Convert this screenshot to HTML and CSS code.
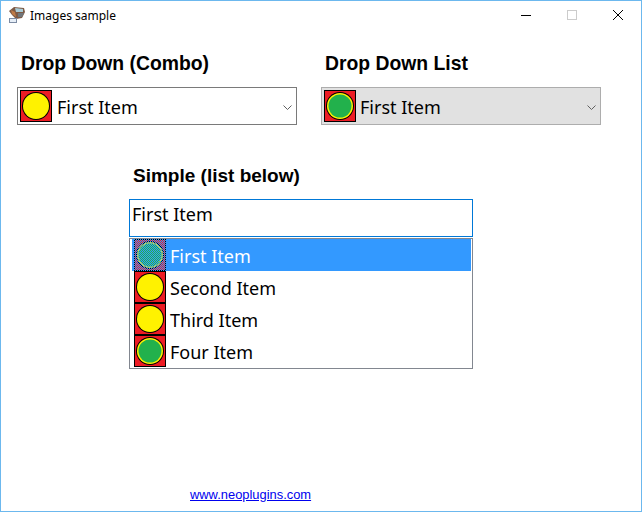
FILE: index.html
```html
<!DOCTYPE html>
<html lang="en">
<head>
<meta charset="utf-8">
<title>Images sample</title>
<link rel="stylesheet" href="styles.css">
</head>
<body>
<svg class="defs" width="0" height="0" aria-hidden="true">
  <defs>
    <symbol id="yellow" viewBox="0 0 32 32">
      <rect width="32" height="32" fill="#000"/>
      <rect x="1" y="1" width="30" height="30" fill="#ed1c24"/>
      <circle cx="16" cy="16" r="14" fill="#000"/>
      <circle cx="16" cy="16" r="13" fill="#fff200"/>
    </symbol>
    <symbol id="green" viewBox="0 0 32 32">
      <rect width="32" height="32" fill="#000"/>
      <rect x="1" y="1" width="30" height="30" fill="#ed1c24"/>
      <circle cx="16" cy="16" r="14" fill="#000"/>
      <circle cx="16" cy="16" r="13" fill="#fff200"/>
      <circle cx="16" cy="16" r="11.5" fill="#22b14c"/>
    </symbol>
  </defs>
</svg>
<main class="window">
  <header class="titlebar">
    <svg class="app-icon" width="16" height="16" viewBox="0 0 16 16">
      <path d="M0 4 L5 0 L15 1 L16 5 L13 11 L7 12 L3 8 Z" fill="#7d5a45"/>
      <path d="M2 3 L6 5 L7 10 L3 7 Z" fill="#c07a45"/>
      <path d="M6 1 L14 2 L14 5 L7 5 Z" fill="#a9cbd6"/>
      <path d="M9 6 L15 6 L13 10 L9 10 Z" fill="#70757a"/>
      <rect x="0.5" y="11.5" width="7" height="4" fill="#e6eef7" stroke="#7c8ba3"/>
    </svg>
    <span class="title">Images sample</span>
    <div class="caption">
      <svg class="cap" width="46" height="10" viewBox="0 0 46 10"><path d="M18 5.5H28" stroke="#000" stroke-width="1"/></svg>
      <svg class="cap" width="46" height="10" viewBox="0 0 46 10"><rect x="18.5" y="0.5" width="9" height="9" fill="none" stroke="#ccc"/></svg>
      <svg class="cap" width="46" height="10" viewBox="0 0 46 10"><path d="M18 0L28 10M28 0L18 10" stroke="#000" stroke-width="1"/></svg>
    </div>
  </header>
  <section class="top-row">
    <div class="field">
      <h2 class="label">Drop Down (Combo)</h2>
      <div class="combo">
        <svg class="item-icon"><use href="#yellow"/></svg>
        <span class="item-text">First Item</span>
        <svg class="chevron" width="9" height="5" viewBox="0 0 9 5"><path d="M0.5 0.5L4.5 4.5L8.5 0.5" fill="none" stroke="#606060"/></svg>
      </div>
    </div>
    <div class="field">
      <h2 class="label">Drop Down List</h2>
      <div class="combo combo-list">
        <svg class="item-icon"><use href="#green"/></svg>
        <span class="item-text">First Item</span>
        <svg class="chevron" width="9" height="5" viewBox="0 0 9 5"><path d="M0.5 0.5L4.5 4.5L8.5 0.5" fill="none" stroke="#606060"/></svg>
      </div>
    </div>
  </section>
  <section class="simple">
    <h2 class="label">Simple (list below)</h2>
    <div class="edit">First Item</div>
    <ul class="list">
      <li class="row selected">
        <svg class="item-icon" viewBox="0 0 32 32">
          <use href="#green" width="32" height="32"/>
          <path class="dither" d="M0 .5H32M0 2.5H32M0 4.5H32M0 6.5H32M0 8.5H32M0 10.5H32M0 12.5H32M0 14.5H32M0 16.5H32M0 18.5H32M0 20.5H32M0 22.5H32M0 24.5H32M0 26.5H32M0 28.5H32M0 30.5H32"/>
          <path class="dither" d="M1 1.5H32M1 3.5H32M1 5.5H32M1 7.5H32M1 9.5H32M1 11.5H32M1 13.5H32M1 15.5H32M1 17.5H32M1 19.5H32M1 21.5H32M1 23.5H32M1 25.5H32M1 27.5H32M1 29.5H32M1 31.5H32"/>
        </svg>
        <span class="item-text">First Item</span>
      </li>
      <li class="row"><svg class="item-icon"><use href="#yellow"/></svg><span class="item-text">Second Item</span></li>
      <li class="row"><svg class="item-icon"><use href="#yellow"/></svg><span class="item-text">Third Item</span></li>
      <li class="row"><svg class="item-icon"><use href="#green"/></svg><span class="item-text">Four Item</span></li>
    </ul>
  </section>
  <footer class="footer"><a class="link" href="#">www.neoplugins.com</a></footer>
</main>
</body>
</html>
```
FILE: styles.css
```css
* { box-sizing: border-box; }
html, body { margin: 0; padding: 0; background: #fff; }
.defs { position: absolute; }
.window {
  width: 642px;
  height: 512px;
  border: 1px solid #6cb8ee;
  background: #fff;
  overflow: hidden;
  font-family: "Noto Sans", sans-serif;
  color: #000;
}
.titlebar {
  display: flex;
  align-items: center;
  height: 28px;
  padding-left: 8px;
}
.app-icon { margin-right: 5px; flex: none; }
.title { font-size: 12px; }
.caption { margin-left: auto; display: flex; }
.cap { display: block; }
.top-row {
  display: flex;
  margin-top: 21px;
  padding-left: 16px;
  gap: 24px;
}
.field { width: 280px; }
.label {
  margin: 0 0 10px 4px;
  font: bold 19.35px/27px "Liberation Sans", sans-serif;
}
.combo {
  display: flex;
  align-items: center;
  height: 38px;
  padding: 0 4px 0 2px;
  border: 1px solid #7a7a7a;
}
.combo-list { background: #e1e1e1; border-color: #adadad; }
.combo-list .item-text { margin-left: 4px; }
.item-icon { width: 32px; height: 32px; flex: none; display: block; }
.item-text { font-size: 18px; line-height: 26px; margin: 2px 0 0 5px; white-space: nowrap; }
.chevron { margin-left: auto; margin-top: 2px; }
.simple { margin: 37px 0 0 128px; width: 344px; }
.simple .label { margin: 0 0 10px 4px; font-size: 19px; }
.edit {
  height: 38px;
  padding: 1px 2px;
  border: 1px solid #0078d7;
  font-size: 18px;
  line-height: 26px;
}
.list {
  list-style: none;
  margin: 1px 0 0;
  padding: 0 1px 0 2px;
  height: 131px;
  border: 1px solid #828790;
}
.row { display: flex; height: 32px; padding-left: 2px; align-items: center; }
.row .item-text { margin-left: 4px; }
.selected { background: #3399ff; color: #fff; }
.dither { fill: none; stroke: #3399ff; stroke-width: 1; stroke-dasharray: 1 1; }
.footer { margin-top: 113px; padding-left: 189px; }
.link { font: 12.9px/16px "Liberation Sans", sans-serif; color: #0000ee; text-decoration: underline; }
```
